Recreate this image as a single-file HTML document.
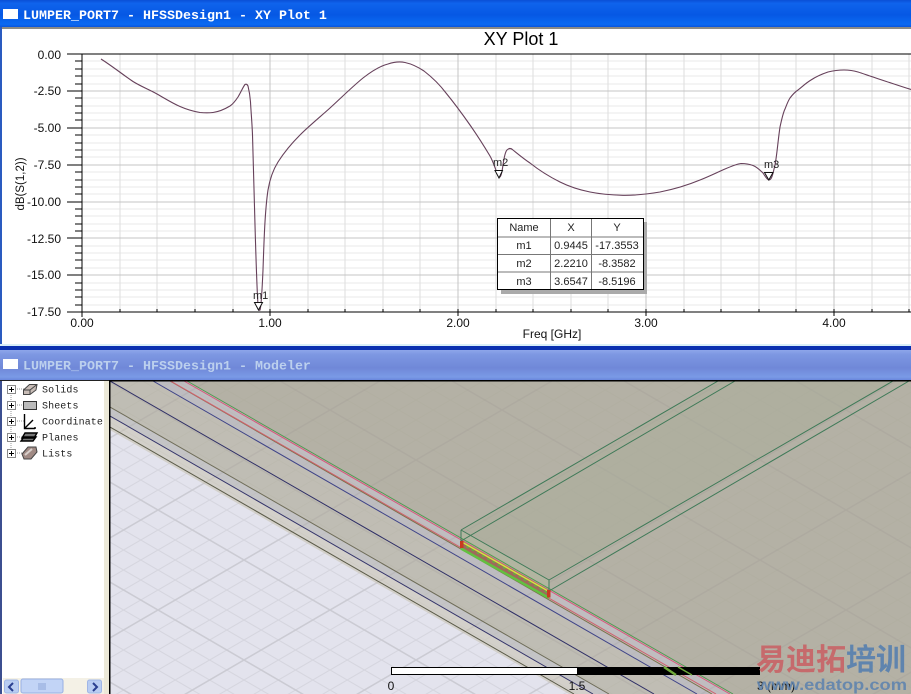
<!DOCTYPE html>
<html><head><meta charset="utf-8"><style>
html,body{margin:0;padding:0;background:#fff;width:911px;height:694px;overflow:hidden}
svg{display:block}
text{font-family:"Liberation Sans",sans-serif}
.t{font-family:"Liberation Mono",monospace;font-weight:bold;font-size:13.33px}
.tr{font-family:"Liberation Mono",monospace;font-size:10px;fill:#222;letter-spacing:.1px}
.a{font-size:12px;fill:#111}
.c{font-size:11px;fill:#222;text-anchor:middle}
.m{font-size:11px;fill:#222}
</style></head><body>
<svg width="911" height="694" viewBox="0 0 911 694" xmlns="http://www.w3.org/2000/svg">
<defs>
<linearGradient id="g1" x1="0" y1="0" x2="0" y2="1"><stop offset="0" stop-color="#0a4fd6"/><stop offset=".12" stop-color="#0f63ec"/><stop offset=".55" stop-color="#0658e4"/><stop offset=".9" stop-color="#0a6af2"/><stop offset="1" stop-color="#0a55dc"/></linearGradient>
<linearGradient id="g2" x1="0" y1="0" x2="0" y2="1"><stop offset="0" stop-color="#8ea6ea"/><stop offset=".15" stop-color="#7d97e2"/><stop offset=".6" stop-color="#7088d8"/><stop offset=".9" stop-color="#7a9ae6"/><stop offset="1" stop-color="#6a86dc"/></linearGradient>
<pattern id="pl" patternUnits="userSpaceOnUse" x="158" y="510" width="172" height="100">
<path d="M0-80L172 20M0-60L172 40M0-40L172 60M0-20L172 80M0 20L172 120M0 40L172 140M0 60L172 160M0 80L172 180M0 20L172-80M0 40L172-60M0 60L172-40M0 80L172-20M0 120L172 20M0 140L172 40M0 160L172 60M0 180L172 80" stroke="#d6d6df" stroke-width="1.1" fill="none"/>
<path d="M0 0L172 100M0 100L172 0" stroke="#cbcbd3" stroke-width="1.6" fill="none"/>
</pattern>
<pattern id="pt" patternUnits="userSpaceOnUse" x="158" y="510" width="172" height="100">
<path d="M0-80L172 20M0-60L172 40M0-40L172 60M0-20L172 80M0 20L172 120M0 40L172 140M0 60L172 160M0 80L172 180M0 20L172-80M0 40L172-60M0 60L172-40M0 80L172-20M0 120L172 20M0 140L172 40M0 160L172 60M0 180L172 80" stroke="#8a8878" stroke-opacity=".07" stroke-width="1" fill="none"/>
<path d="M0 0L172 100M0 100L172 0" stroke="#8a7f80" stroke-opacity=".14" stroke-width="1.5" fill="none"/>
</pattern>
<clipPath id="v"><rect x="110" y="381" width="801" height="313"/></clipPath>
</defs>

<!-- top title bar -->
<rect x="0" y="0" width="911" height="27" fill="url(#g1)"/>
<rect x="3" y="9" width="15" height="10" fill="#fff"/>
<text class="t" x="23" y="19" fill="#fff">LUMPER_PORT7 - HFSSDesign1 - XY Plot 1</text>

<!-- plot window -->
<rect x="0" y="27" width="911" height="317" fill="#fff"/>
<rect x="0" y="27" width="911" height="2" fill="#8b8b85"/>
<rect x="0" y="27" width="2" height="317" fill="#2a5bc0"/>
<text x="521" y="45" font-size="18" fill="#000" text-anchor="middle">XY Plot 1</text>

<path d="M82 61H911M82 69H911M82 76H911M82 84H911M82 98H911M82 106H911M82 113H911M82 120H911M82 135H911M82 143H911M82 150H911M82 157H911M82 172H911M82 180H911M82 187H911M82 194H911M82 209H911M82 216H911M82 224H911M82 231H911M82 246H911M82 253H911M82 260H911M82 268H911M82 283H911M82 290H911M82 297H911M82 305H911" stroke="#e8e8e8" stroke-width="1" fill="none" shape-rendering="crispEdges"/>
<path d="M120 54V312M157 54V312M195 54V312M233 54V312M308 54V312M345 54V312M383 54V312M420 54V312M496 54V312M533 54V312M571 54V312M608 54V312M684 54V312M721 54V312M759 54V312M796 54V312M872 54V312M909 54V312" stroke="#dedede" stroke-width="1" fill="none" shape-rendering="crispEdges"/>
<path d="M82 91H911M82 128H911M82 165H911M82 202H911M82 238H911M82 275H911M270 54V312M458 54V312M646 54V312M834 54V312" stroke="#c4c4c4" stroke-width="1" fill="none" shape-rendering="crispEdges"/>

<path d="M67 54H911M67 312H911M82 54V317" stroke="#000" stroke-width="1" fill="none" shape-rendering="crispEdges"/>
<path d="M67 91H82M67 128H82M67 165H82M67 202H82M67 238H82M67 275H82M75 61H82M75 69H82M75 76H82M75 84H82M75 98H82M75 106H82M75 113H82M75 120H82M75 135H82M75 143H82M75 150H82M75 157H82M75 172H82M75 180H82M75 187H82M75 194H82M75 209H82M75 216H82M75 224H82M75 231H82M75 246H82M75 253H82M75 260H82M75 268H82M75 283H82M75 290H82M75 297H82M75 305H82M120 309V312M157 309V312M195 309V312M233 309V312M270 309V316M308 309V312M345 309V312M383 309V312M420 309V312M458 309V316M496 309V312M533 309V312M571 309V312M608 309V312M646 309V316M684 309V312M721 309V312M759 309V312M796 309V312M834 309V316M872 309V312M909 309V312" stroke="#000" stroke-width="1" fill="none" shape-rendering="crispEdges"/>

<g text-anchor="end">
<text class="a" x="61" y="59">0.00</text>
<text class="a" x="61" y="95">-2.50</text>
<text class="a" x="61" y="132">-5.00</text>
<text class="a" x="61" y="169">-7.50</text>
<text class="a" x="61" y="206">-10.00</text>
<text class="a" x="61" y="243">-12.50</text>
<text class="a" x="61" y="279">-15.00</text>
<text class="a" x="61" y="316">-17.50</text>
</g>
<g text-anchor="middle">
<text class="a" x="82" y="327">0.00</text>
<text class="a" x="270" y="327">1.00</text>
<text class="a" x="458" y="327">2.00</text>
<text class="a" x="646" y="327">3.00</text>
<text class="a" x="834" y="327">4.00</text>
<text class="a" x="552" y="338">Freq [GHz]</text>
<text class="a" transform="translate(24,184) rotate(-90)" style="font-size:11.5px">dB(S(1,2))</text>
</g>

<path d="M101 59C112 66 122 74 133 81.500C141 86.500 149 89.500 157 94C165 98.500 172 103 180 106.500C188 110 194 111.500 200 112.500C205 113 209 113 213 112.500C220 111.500 225 109 230 106C233 104 236 100 238 97C241 92 243 87 245 84.500C246 84 247 84 248 86C249 90 250 95 250.500 102C251 112 252 122 252.500 135C253 155 254 190 255 225C256 260 257 290 258 305C258.500 310 259.500 311 260 310C261 308 262 292 263 270C264 240 265 210 268 190C270 178 273 170 278 162C285 151 292 143 300 135C310 125 320 117 330 108C342 97 352 87 363 78C372 71 380 66 388 64C394 62 400 61.500 405 62.500C412 64 418 67 424 71C433 78 440 85 446 93C455 104 463 115 470 125C477 135 484 146 490 156C494 163 496 172 499 177C501 178 502 172 503 165C504 158 505 152 507 150C509 148 511 148 513 150C518 154 524 159 530 163C540 171 550 177 560 182C570 187 580 190 590 192C600 194 612 195 623 195.300C635 195.500 648 194 660 192C675 189 688 185 700 180C710 176 718 172 725 169C732 166 737 164 741 163.500C745 163.500 749 164 753 165.500C757 167 760 170 763 173C765 176 767 180 769 180C772 180 773 173 775 165C777 155 778 140 780 127C782 118 783 113 785 109C787 104 788 101 790 98C793 94 795 92 798 90C803 86 806 83 811 80C817 76 822 74 828 72C834 70.500 838 70 844 70C849 70 853 70.500 858 72C863 73.500 868 75.500 873 77C880 79.500 885 81 891 83C897 85 903 87 911 89.500" fill="none" stroke="#66405a" stroke-width="1.1"/>

<!-- markers -->
<path d="M254.500 302.500H262.500L258.500 310Z" fill="#fff" stroke="#111" stroke-width="1"/>
<text class="m" x="253" y="299">m1</text>
<path d="M495 170.500H502.500L499 178Z" fill="#fff" stroke="#111" stroke-width="1"/>
<text class="m" x="493" y="166">m2</text>
<path d="M764.500 172.500H773L768.800 180Z" fill="#fff" stroke="#111" stroke-width="1"/>
<text class="m" x="764" y="168">m3</text>

<!-- table -->
<rect x="501" y="222" width="146" height="72" fill="#aaa"/>
<rect x="497.500" y="218.500" width="146" height="71" fill="#fff" stroke="#000"/>
<path d="M498 237H643M498 254.500H643M498 272H643M550.500 219V289M591.500 219V289" stroke="#777" stroke-width="1" fill="none" shape-rendering="crispEdges"/>
<text class="c" x="524" y="231">Name</text><text class="c" x="571" y="231">X</text><text class="c" x="617" y="231">Y</text>
<text class="c" x="524" y="249">m1</text><text class="c" x="571" y="249">0.9445</text><text class="c" x="617" y="249">-17.3553</text>
<text class="c" x="524" y="267">m2</text><text class="c" x="571" y="267">2.2210</text><text class="c" x="617" y="267">-8.3582</text>
<text class="c" x="524" y="285">m3</text><text class="c" x="571" y="285">3.6547</text><text class="c" x="617" y="285">-8.5196</text>

<!-- separator + modeler title -->
<rect x="0" y="344" width="911" height="2" fill="#d8eef8"/>
<rect x="0" y="346" width="911" height="4" fill="#0a30b0"/>
<rect x="0" y="350" width="911" height="30" fill="url(#g2)"/>
<rect x="3" y="359" width="15" height="10" fill="#fff"/>
<text class="t" x="23" y="369.500" fill="#bcd0ee">LUMPER_PORT7 - HFSSDesign1 - Modeler</text>

<!-- tree pane -->
<rect x="0" y="380" width="109" height="314" fill="#fff"/>
<rect x="0" y="380" width="2" height="314" fill="#3c4f90"/>
<rect x="104" y="380" width="5" height="314" fill="#ece9d8"/>
<rect x="0" y="380" width="109" height="1" fill="#222"/>
<path d="M11 389V453M11 389H24M11 405H24M11 421H24M11 437H24M11 453H24" stroke="#999" stroke-dasharray="1 1" fill="none" shape-rendering="crispEdges"/>
<g fill="#fff" stroke="#8a8a8a" shape-rendering="crispEdges">
<rect x="7.500" y="385.500" width="8" height="8"/><rect x="7.500" y="401.500" width="8" height="8"/><rect x="7.500" y="417.500" width="8" height="8"/><rect x="7.500" y="433.500" width="8" height="8"/><rect x="7.500" y="449.500" width="8" height="8"/>
</g>
<path d="M9 389.500H14M11.500 387V392M9 405.500H14M11.500 403V408M9 421.500H14M11.500 419V424M9 437.500H14M11.500 435V440M9 453.500H14M11.500 451V456" stroke="#000" fill="none" shape-rendering="crispEdges"/>
<path d="M23.500 390L29.500 384.500H37L36 390L30 394.500H23.500Z" fill="#c8bcb6" stroke="#444"/><path d="M23.500 390H30L37 384.500M30 390V394.500" stroke="#444" fill="none"/>
<rect x="23.500" y="401.500" width="13" height="8" fill="#bbb" stroke="#333"/>
<path d="M24.500 414V428.500H35M24.500 428.500L33 420" stroke="#000" stroke-width="1.4" fill="none"/><circle cx="35" cy="428" r="1" fill="#000"/>
<path d="M25 433H37L34 438H22ZM24 437H36L33 441H21Z" fill="#777" stroke="#000" stroke-width="1.4"/>
<path d="M22 454L28 447H36L37 452L31 459H24Z" fill="#a08a84" stroke="#444"/><path d="M25 455L32 449" stroke="#d8d0cc" stroke-width="2"/>
<text class="tr" x="42" y="392.500">Solids</text>
<text class="tr" x="42" y="408.500">Sheets</text>
<text class="tr" x="42" y="424.500">Coordinate</text>
<text class="tr" x="42" y="440.500">Planes</text>
<text class="tr" x="42" y="456.500">Lists</text>
<!-- scrollbar -->
<rect x="3" y="678" width="101" height="16" fill="#f4f1e6"/>
<rect x="4.500" y="680" width="14" height="13" rx="2" fill="#b9cdf2" stroke="#a0b6e6"/>
<path d="M13 683L9 687L13 691" stroke="#2a3f90" stroke-width="2" fill="none"/>
<rect x="21" y="679" width="42" height="14" rx="2" fill="#c2d4f6" stroke="#98b0e4"/>
<path d="M39 683V690M41 683V690M43 683V690M45 683V690" stroke="#8ea6d8" fill="none" shape-rendering="crispEdges"/>
<rect x="87.500" y="680" width="14" height="13" rx="2" fill="#b9cdf2" stroke="#a0b6e6"/>
<path d="M93 683L97 687L93 691" stroke="#2a3f90" stroke-width="2" fill="none"/>

<!-- 3D view -->
<rect x="110" y="381" width="801" height="313" fill="#e3e3ed"/>
<rect x="110" y="381" width="801" height="313" fill="url(#pl)"/>
<g clip-path="url(#v)">
<path d="M110 430L569 694H911V381H110Z" fill="#d3d0ca"/>
<path d="M110 416L593 694H911V381H110Z" fill="#c4c4c6"/>
<path d="M110 407L609 694H911V381H110Z" fill="#bfbdb4"/>
<path d="M110 381L654 694H911V381H110Z" fill="#c0bdb4"/>
<path d="M110 381H153L697 694H654Z" fill="#c0bdb4"/>
<path d="M153 381H170L713 694H697Z" fill="#bdbcc0"/>
<path d="M170 381H188L732 694H713Z" fill="#c0bdc0"/>
<path d="M188 381H911V694H732Z" fill="#b4b1a5"/>
<path d="M110 430L569 694H911V381H110Z" fill="url(#pt)"/>
<!-- box faces -->
<path d="M461 530L718 381H893L549 580Z" fill="#a9ad98" fill-opacity=".45"/>
<path d="M461 530L549 580V591L461 541Z" fill="#b2b5a0"/>
<!-- long lines -->
<path d="M110 427L574 694" stroke="#5a5a48" fill="none"/>
<path d="M110 416L593 694" stroke="#34346a" fill="none"/>
<path d="M110 407L609 694" stroke="#6e6c58" fill="none"/>
<path d="M110 381L654 694" stroke="#2f2f66" fill="none"/>
<path d="M153 381L697 694" stroke="#3f4488" fill="none"/>
<path d="M170 381L712 694" stroke="#7b7048" fill="none"/>
<path d="M167 379L716 694" stroke="#d0606c" fill="none"/>
<path d="M187 381L733 694" stroke="#4f9a50" fill="none"/>
<path d="M184 381L730 694" stroke="#d8587c" fill="none"/>
<!-- box edges -->
<path d="M461 530L718 381M461 541L735 381M549 580L893 381M549 591L909 381M461 530L549 580M461 541L549 591M461 530V548M549 580V597" stroke="#3f7a58" fill="none"/>
<!-- port -->
<path d="M461 541L549 591V597L461 548Z" fill="#a0685c"/>
<path d="M461 541.500L549 591.500" stroke="#d8e040" stroke-width="1.500" fill="none"/>
<path d="M461 548.500L549 598" stroke="#62c040" stroke-width="2.500" fill="none"/>
<path d="M461 543.500L549 593.500" stroke="#62b040" stroke-width="1.500" stroke-dasharray="3 3" fill="none"/>
<rect x="460" y="541" width="3.500" height="7" fill="#c83a20"/>
<rect x="547" y="590" width="3.500" height="7.500" fill="#c83a20"/>
</g>
<rect x="109" y="380" width="802" height="1.500" fill="#000"/>
<rect x="109" y="380" width="1.500" height="314" fill="#000"/>

<!-- scale bar -->
<rect x="391.500" y="667.500" width="186" height="7" fill="#fff" stroke="#000"/>
<rect x="577" y="667" width="183" height="8" fill="#000"/>
<path d="M664 667L676 675" stroke="#6fa83a" stroke-width="2.500" fill="none"/>
<path d="M678 667L692 675" stroke="#6fa83a" stroke-width="1.500" fill="none"/>
<text class="a" x="391" y="690" text-anchor="middle">0</text>
<text class="a" x="577" y="690" text-anchor="middle">1.5</text>
<text class="a" x="757" y="690">3 (mm)</text>

<!-- watermark -->
<text x="756" y="670" font-size="30" font-weight="bold" style="font-family:'Noto Sans CJK SC',sans-serif" fill="#c66a6c">易迪拓<tspan fill="#5f84ae">培训</tspan></text>
<text x="757" y="690" font-size="16" font-weight="bold" fill="#5f84ae" textLength="150" lengthAdjust="spacingAndGlyphs" fill-opacity=".9">www.edatop.com</text>
</svg>
</body></html>
